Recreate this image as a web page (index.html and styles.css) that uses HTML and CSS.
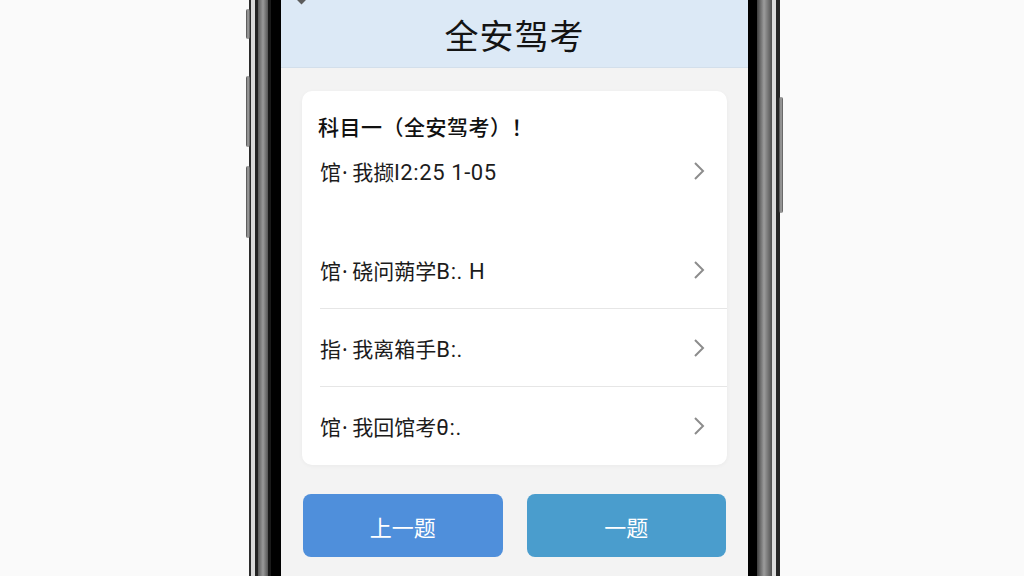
FILE: index.html
```html
<!DOCTYPE html>
<html lang="zh-CN">
<head>
    <meta charset="UTF-8">
    <title>全安驾考</title>
    <meta name="viewport" content="width=device-width, initial-scale=1.0">
    <link rel="stylesheet" href="styles.css">
</head>
<body>
    <div class="stage">
        <div class="phone">
            <span class="side-btn btn-a"></span>
            <span class="side-btn btn-b"></span>
            <span class="side-btn btn-c"></span>
            <span class="side-btn btn-r"></span>

            <div class="screen">
                <header class="top-bar">
                    <span class="notch-dot"></span>
                    <h1>全安驾考</h1>
                </header>

                <main class="content">
                    <div class="card">
                        <div class="card-title">科目一（全安驾考）！</div>

                        <div class="row first">
                            <span class="row-text">馆<span class="dot">·</span> 我撷<span class="latin">l2:25 1-05</span></span>
                            <svg class="chevron" width="12" height="20" viewBox="0 0 12 20"><polyline points="2,2 10,10 2,18" /></svg>
                        </div>
                        <div class="row">
                            <span class="row-text">馆<span class="dot">·</span> 硗问蒴学<span class="latin">B:. H</span></span>
                            <svg class="chevron" width="12" height="20" viewBox="0 0 12 20"><polyline points="2,2 10,10 2,18" /></svg>
                        </div>
                        <div class="row">
                            <span class="row-text">指<span class="dot">·</span> 我离箱手<span class="latin">B:.</span></span>
                            <svg class="chevron" width="12" height="20" viewBox="0 0 12 20"><polyline points="2,2 10,10 2,18" /></svg>
                        </div>
                        <div class="row last">
                            <span class="row-text">馆<span class="dot">·</span> 我回馆考<span class="latin">θ:.</span></span>
                            <svg class="chevron" width="12" height="20" viewBox="0 0 12 20"><polyline points="2,2 10,10 2,18" /></svg>
                        </div>
                    </div>

                    <div class="actions">
                        <button class="prev">上一题</button>
                        <button class="next">一题</button>
                    </div>
                </main>
            </div>
        </div>
    </div>
</body>
</html>
```

FILE: styles.css
```css
/* Global Reset */
* {
    margin: 0;
    padding: 0;
    box-sizing: border-box;
}
body {
    font-family: "Noto Sans CJK SC", "Noto Sans", sans-serif;
    height: 100vh;
    background: #fafafa;
    color: #1a1a1a;
    overflow: hidden;
}
.stage {
    display: flex;
    justify-content: center;
    padding-left: 5px;
    height: 576px;
}

/* phone body: side frames drawn with hard gradient stops */
.phone {
    position: relative;
    width: 531px;
    height: 576px;
    padding: 0 32px;
    background: linear-gradient(to right,
        #2b2b2b 0, #2b2b2b 2px,
        #d9d9d9 2px, #d9d9d9 6px,
        #222 6px, #222 9px,
        #5a5a5a 9px, #9a9a9a 14px, #555 19px,
        #1a1a1a 19px, #1a1a1a 22px,
        #000 22px, #000 32px,
        #f3f3f3 32px, #f3f3f3 499px,
        #000 499px, #000 508px,
        #3e3e3e 508px, #9c9c9c 515px, #505050 523px,
        #dcdcdc 523px, #dcdcdc 527px,
        #262626 527px, #262626 531px);
}
.side-btn {
    position: absolute;
    width: 4px;
    background: linear-gradient(to right, #444, #aaa, #555);
    border-radius: 2px;
}
.btn-a { left: -3px; top: 9px; height: 30px; }
.btn-b { left: -3px; top: 76px; height: 71px; }
.btn-c { left: -3px; top: 166px; height: 72px; }
.btn-r { right: -3px; top: 97px; height: 116px; }

.screen {
    height: 100%;
    background: #f3f3f3;
    display: flex;
    flex-direction: column;
}
.top-bar {
    position: relative;
    height: 68px;
    background: #dce9f6;
    border-bottom: 1px solid #d3dfeb;
    display: flex;
    justify-content: center;
    align-items: center;
    padding-top: 2px;
}
.top-bar h1 {
    font-size: 34px;
    font-weight: 400;
    color: #141414;
    letter-spacing: 1px;
}
.notch-dot {
    position: absolute;
    left: 17px;
    top: -4px;
    width: 7px;
    height: 7px;
    background: #5c5c5c;
    transform: rotate(45deg);
}

.content {
    padding: 23px 21px 0;
}
.card {
    background: #fff;
    border-radius: 10px;
    box-shadow: 0 1px 4px rgba(0, 0, 0, 0.04);
    padding-top: 21px;
}
.card-title {
    padding-left: 16px;
    font-size: 21px;
    font-weight: 500;
    line-height: 28px;
    color: #111;
    letter-spacing: 0.5px;
}
.row {
    margin-left: 18px;
    padding-right: 22px;
    height: 78px;
    display: flex;
    align-items: center;
    justify-content: space-between;
    border-bottom: 1px solid #e6e6e6;
}
.row.first {
    height: 62px;
    margin-bottom: 29px;
    border-bottom: none;
}
.row.last {
    border-bottom: none;
}
.row-text {
    font-size: 21px;
    color: #1c1c1c;
}
.dot {
    font-family: "Noto Sans", sans-serif;
    margin-left: 1px;
}
.latin {
    font-family: Roboto, "Noto Sans", sans-serif;
    font-size: 22px;
    letter-spacing: 0.6px;
}
.chevron {
    fill: none;
    stroke: #8c8c8c;
    stroke-width: 2;
}

.actions {
    display: flex;
    gap: 24px;
    margin-top: 29px;
    padding: 0 1px;
}
.actions button {
    flex: 1;
    height: 63px;
    border: none;
    border-radius: 8px;
    color: #fff;
    font-family: inherit;
    font-size: 22px;
    cursor: pointer;
}
.prev {
    background: #4f8fdb;
}
.next {
    background: #4a9dcd;
}
```
